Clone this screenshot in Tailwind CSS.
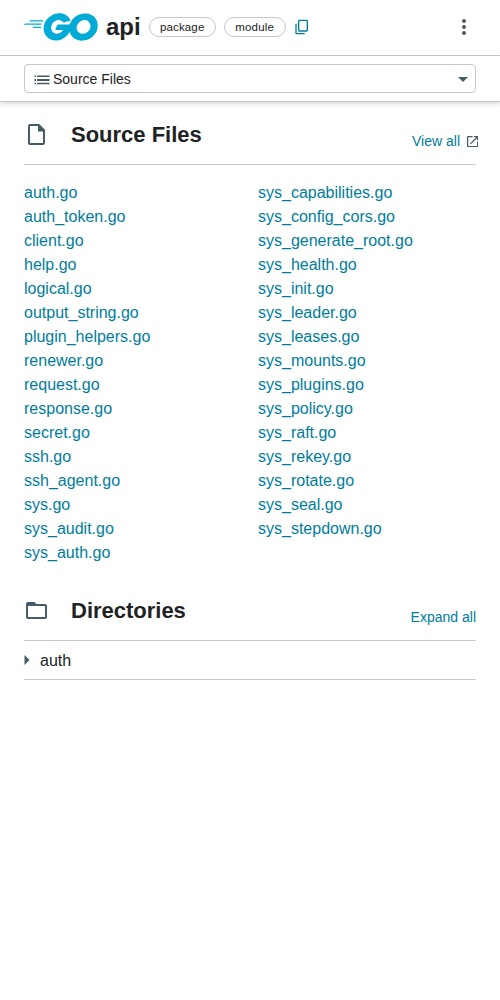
<!DOCTYPE html>
<html lang="en">
<head>
<meta charset="utf-8">
<title>api package</title>
<script src="https://cdn.jsdelivr.net/npm/@tailwindcss/browser@4"></script>
</head>
<body class="bg-white text-[#202224] font-['Liberation_Sans',Arial,sans-serif] text-base">
<header class="h-14 border-b border-[#c6c8ca] flex items-center pl-6 pr-6 pb-px">
  <svg class="w-[74px] h-7 shrink-0" viewBox="24.7 78 206.2 77" fill="#00acd7">
    <path d="M40.2,101.1c-0.4,0-0.5-0.2-0.3-0.5l2.1-2.7c0.2-0.3,0.7-0.5,1.1-0.5l35.7,0c0.4,0,0.5,0.3,0.3,0.6l-1.7,2.6c-0.2,0.3-0.7,0.6-1,0.6L40.2,101.1z"/>
    <path d="M25.1,110.3c-0.4,0-0.5-0.2-0.3-0.5l2.1-2.7c0.2-0.3,0.7-0.5,1.1-0.5l45.6,0c0.4,0,0.6,0.3,0.5,0.6l-0.8,2.4c-0.1,0.4-0.5,0.6-0.9,0.6L25.1,110.3z"/>
    <path d="M49.3,119.5c-0.4,0-0.5-0.3-0.3-0.6l1.4-2.5c0.2-0.3,0.6-0.6,1-0.6l20,0c0.4,0,0.6,0.3,0.6,0.7l-0.2,2.4c0,0.4-0.4,0.7-0.7,0.7L49.3,119.5z"/>
    <path d="M153.1,99.3c-6.3,1.6-10.6,2.8-16.8,4.4c-1.5,0.4-1.6,0.5-2.9-1c-1.5-1.7-2.6-2.8-4.7-3.8c-6.3-3.1-12.4-2.2-18.1,1.5c-6.8,4.4-10.3,10.9-10.2,19c0.1,8,5.6,14.6,13.5,15.7c6.8,0.9,12.5-1.5,17-6.6c0.9-1.1,1.7-2.3,2.7-3.7c-3.6,0-8.1,0-19.3,0c-2.1,0-2.6-1.3-1.9-3c1.3-3.1,3.7-8.3,5.1-10.9c0.3-0.6,1-1.6,2.5-1.6c5.1,0,23.9,0,36.4,0c-0.2,2.7-0.2,5.4-0.6,8.1c-1.1,7.2-3.8,13.8-8.2,19.6c-7.2,9.5-16.6,15.4-28.5,17c-9.8,1.3-18.9-0.6-26.9-6.6c-7.4-5.6-11.6-13-12.7-22.2c-1.3-10.9,1.9-20.7,8.5-29.3c7.1-9.3,16.5-15.2,28-17.3c9.4-1.7,18.4-0.6,26.5,4.9c5.3,3.5,9.1,8.3,11.6,14.1C154.7,98.5,154.3,99,153.1,99.3z"/>
    <path fill-rule="evenodd" d="M186.2,154.6c-9.1-0.2-17.4-2.8-24.4-8.8c-5.9-5.1-9.6-11.6-10.8-19.3c-1.8-11.3,1.3-21.3,8.1-30.2c7.3-9.6,16.1-14.6,28-16.7c10.2-1.8,19.8-0.8,28.5,5.1c7.9,5.4,12.8,12.7,14.1,22.3c1.7,13.5-2.2,24.5-11.5,33.9c-6.6,6.7-14.7,10.9-24,12.8C191.5,154.2,188.8,154.3,186.2,154.6z M210,114.2c-0.1-1.3-0.1-2.3-0.3-3.3c-1.8-9.9-10.9-15.5-20.4-13.3c-9.3,2.1-15.3,8-17.5,17.4c-1.8,7.8,2,15.7,9.2,18.9c5.5,2.4,11,2.1,16.3-0.6C205.2,129.2,209.5,122.8,210,114.2z"/>
  </svg>
  <h1 class="ml-2 text-2xl leading-7 font-bold">api</h1>
  <span class="ml-2 w-[67px] h-5 flex justify-center border border-[#c6c8ca] rounded-full text-[11.490px] tracking-[0.16px] leading-[18px]">package</span>
  <span class="ml-2 w-[62px] h-5 flex justify-center border border-[#c6c8ca] rounded-full text-[11.490px] tracking-[0.2px] leading-[18px]">module</span>
  <svg class="ml-2 size-4" viewBox="0 0 24 24" fill="#007d9c"><path d="M19 1H8C6.900 1 6 1.900 6 3v14c0 1.100.900 2 2 2h11c1.100 0 2-.900 2-2V3c0-1.100-.900-2-2-2zm0 16H8V3h11v14zM2 21V7h2v14h12v2H4c-1.100 0-2-.900-2-2z"/></svg>
  <svg class="ml-auto w-6 h-6" viewBox="0 0 24 24" fill="#555759"><circle cx="12" cy="6" r="2"/><circle cx="12" cy="12" r="2"/><circle cx="12" cy="18" r="2"/></svg>
</header>
<nav class="h-[46px] px-6 pt-2 border-b border-[#c6c8ca] shadow-[0_2px_5px_rgba(0,0,0,0.16)]">
  <div class="h-[29px] border border-[#c6c8ca] rounded flex items-center pl-[9px] pr-[7px] text-sm">
    <svg class="w-4 h-[10px] mt-[3px] mr-[3px]" viewBox="0 0 16 10" fill="#455b66"><path d="M.500 .500h1.500V2H.500zM3 .500h12.500V2H3zM.500 4h1.500v2H.500zM3 4h12.500v2H3zM.500 7.700h1.500v1.500H.500zM3 7.700h12.500v1.500H3z"/></svg>
    <span>Source Files</span>
    <svg class="ml-auto mt-px w-[10px] h-[5px]" viewBox="0 0 10 5" fill="#455b66"><path d="M0 0h10L5 5z"/></svg>
  </div>
</nav>
<main class="px-6">
  <section>
    <div class="h-[63px] border-b border-[#c6c8ca] flex items-start">
      <svg class="mt-[22px] ml-1 w-[17px] h-[21px]" viewBox="0 0 17 21"><path d="M2 1h8.500L16 6.500V19q0 1-1 1H2q-1 0-1-1V2q0-1 1-1z" fill="none" stroke="#455b66" stroke-width="2"/><path d="M10 0h1l6 6v1.500h-7z" fill="#455b66"/></svg>
      <h2 class="ml-[26px] mt-[19px] text-[22px] leading-7 font-bold tracking-[-0.01px]">Source Files</h2>
      <a class="ml-auto mt-[29px] -mr-[1.800px] flex text-sm leading-5 text-[#007d9c]">View all<svg class="ml-[6.500px] mt-[5px] size-[11.300px]" viewBox="3 3 18 18" fill="#455b66"><path d="M19 19H5V5h7V3H5a2 2 0 00-2 2v14a2 2 0 002 2h14c1.100 0 2-.900 2-2v-7h-2v7zM14 3v2h3.590l-9.830 9.830 1.410 1.410L19 6.410V10h2V3h-7z"/></svg></a>
    </div>
    <div class="pt-4 grid grid-cols-2 gap-x-4 leading-6 text-[#007d9c]">
      <ul>
        <li>auth.go</li><li>auth_token.go</li><li>client.go</li><li>help.go</li><li>logical.go</li><li>output_string.go</li><li>plugin_helpers.go</li><li>renewer.go</li><li>request.go</li><li>response.go</li><li>secret.go</li><li>ssh.go</li><li>ssh_agent.go</li><li>sys.go</li><li>sys_audit.go</li><li>sys_auth.go</li>
      </ul>
      <ul>
        <li>sys_capabilities.go</li><li>sys_config_cors.go</li><li>sys_generate_root.go</li><li>sys_health.go</li><li>sys_init.go</li><li>sys_leader.go</li><li>sys_leases.go</li><li>sys_mounts.go</li><li>sys_plugins.go</li><li>sys_policy.go</li><li>sys_raft.go</li><li>sys_rekey.go</li><li>sys_rotate.go</li><li>sys_seal.go</li><li>sys_stepdown.go</li>
      </ul>
    </div>
  </section>
  <section class="mt-3">
    <div class="h-[64px] border-b border-[#c6c8ca] flex items-start">
      <svg class="mt-[25px] ml-[2px] w-[21px] h-[17px]" viewBox="0 0 21 17"><path d="M2 1h6l2 2h9q1 0 1 1v11q0 1-1 1H2q-1 0-1-1V2q0-1 1-1z" fill="none" stroke="#455b66" stroke-width="2"/><path d="M1 1h7l2 2v1H1z" fill="#455b66"/></svg>
      <h2 class="ml-6 mt-5 text-[22px] leading-7 font-bold tracking-[-0.01px]">Directories</h2>
      <a class="ml-auto mt-[30px] text-sm leading-5 text-[#007d9c]">Expand all</a>
    </div>
    <div class="h-[39px] border-b border-[#c6c8ca] flex items-center">
      <svg class="w-[6px] h-[10px] mr-[10px]" viewBox="0 0 6 10" fill="#455b66"><path d="M.500 0v10L5.500 5z"/></svg>
      <span class="pt-0.5">auth</span>
    </div>
  </section>
</main>
</body>
</html>
